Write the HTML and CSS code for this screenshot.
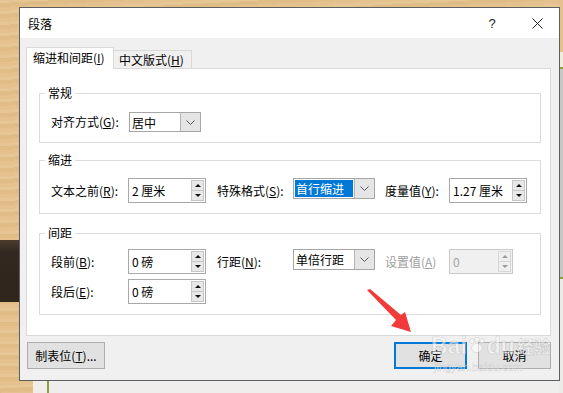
FILE: index.html
```html
<!DOCTYPE html>
<html lang="zh-CN">
<head>
    <meta charset="UTF-8">
    <meta name="viewport" content="width=device-width, initial-scale=1.0">
    <title>段落</title>
    <link rel="stylesheet" href="styles.css">
</head>
<body>
    <div class="screen">
        <div class="dialog">
            <div class="titlebar">
                <span class="title">段落</span>
                <span class="help">?</span>
                <span class="close">
                    <svg width="11" height="11" viewBox="0 0 11 11"><path d="M0.5 0.5 L10.5 10.5 M10.5 0.5 L0.5 10.5" stroke="#222" stroke-width="1" fill="none"/></svg>
                </span>
            </div>

            <div class="tabs">
                <div class="tab active">缩进和间距(<u>I</u>)</div>
                <div class="tab">中文版式(<u>H</u>)</div>
            </div>

            <div class="panel">
                <fieldset class="group group-general">
                    <legend>常规</legend>
                    <div class="grid">
                        <label>对齐方式(<u>G</u>):</label>
                        <div class="combo combo-short">
                            <div class="val"><span>居中</span></div>
                            <div class="drop"><svg width="9" height="5" viewBox="0 0 9 5"><polyline points="0.5,0.5 4.5,4.5 8.5,0.5" stroke="#555" fill="none"/></svg></div>
                        </div>
                    </div>
                </fieldset>

                <fieldset class="group group-indent">
                    <legend>缩进</legend>
                    <div class="grid">
                        <label>文本之前(<u>R</u>):</label>
                        <div class="spin">
                            <div class="val">2 厘米</div>
                            <div class="spin-btns"><div class="spin-btn"><i class="up"></i></div><div class="spin-btn"><i class="down"></i></div></div>
                        </div>
                        <label>特殊格式(<u>S</u>):</label>
                        <div class="combo">
                            <div class="val sel"><span>首行缩进</span></div>
                            <div class="drop"><svg width="9" height="5" viewBox="0 0 9 5"><polyline points="0.5,0.5 4.5,4.5 8.5,0.5" stroke="#555" fill="none"/></svg></div>
                        </div>
                        <label>度量值(<u>Y</u>):</label>
                        <div class="spin">
                            <div class="val">1.27 厘米</div>
                            <div class="spin-btns"><div class="spin-btn"><i class="up"></i></div><div class="spin-btn"><i class="down"></i></div></div>
                        </div>
                    </div>
                </fieldset>

                <fieldset class="group group-spacing">
                    <legend>间距</legend>
                    <div class="grid">
                        <label>段前(<u>B</u>):</label>
                        <div class="spin">
                            <div class="val">0 磅</div>
                            <div class="spin-btns"><div class="spin-btn"><i class="up"></i></div><div class="spin-btn"><i class="down"></i></div></div>
                        </div>
                        <label>行距(<u>N</u>):</label>
                        <div class="combo">
                            <div class="val"><span>单倍行距</span></div>
                            <div class="drop"><svg width="9" height="5" viewBox="0 0 9 5"><polyline points="0.5,0.5 4.5,4.5 8.5,0.5" stroke="#555" fill="none"/></svg></div>
                        </div>
                        <label class="disabled">设置值(<u>A</u>)</label>
                        <div class="spin spin-narrow disabled">
                            <div class="val">0</div>
                            <div class="spin-btns"><div class="spin-btn"><i class="up"></i></div><div class="spin-btn"><i class="down"></i></div></div>
                        </div>

                        <label>段后(<u>E</u>):</label>
                        <div class="spin">
                            <div class="val">0 磅</div>
                            <div class="spin-btns"><div class="spin-btn"><i class="up"></i></div><div class="spin-btn"><i class="down"></i></div></div>
                        </div>
                    </div>
                </fieldset>
            </div>

            <div class="footer">
                <button class="btn btn-wide">制表位(<u>T</u>)...</button>
                <button class="btn btn-default">确定</button>
                <button class="btn">取消</button>
            </div>
        </div>

        <!-- annotation arrow drawn over the screenshot -->
        <svg class="arrow" width="563" height="393" viewBox="0 0 563 393">
            <polygon points="367,290 370,289 401,315 405,312 411,332 391,326 396,320" fill="#f23a3a"/>
        </svg>

        <div class="watermark">
            <div class="wm-logo">Bai<svg width="18" height="16" viewBox="0 0 18 16"><circle cx="4" cy="4" r="2.3"/><circle cx="9" cy="2.6" r="2.3"/><circle cx="14" cy="4" r="2.3"/><ellipse cx="9" cy="11" rx="5.5" ry="4.5"/></svg>du <span>经验</span></div>
            <div class="wm-url">jingyan.baidu.com</div>
        </div>
    </div>
</body>
</html>
```

FILE: styles.css
```css
body {
    margin: 0;
    font-family: "Noto Sans CJK SC", "Microsoft YaHei", sans-serif;
    font-size: 12px;
    color: #000;
}

.screen {
    position: relative;
    width: 563px;
    height: 393px;
    overflow: hidden;
    box-sizing: border-box;
    padding: 7px 0 0 19px;
    background:
        linear-gradient(#e4c18d 0 52px, #f1ebdd 52px 67px, #8f9d3c 67px 69px, #c7c7c5 69px 277px, #8f9d3c 277px 279px, #ecebe8 279px) right top / 4px 100% no-repeat,
        linear-gradient(90deg, transparent 0 33px, #efeeec 33px 47px, #8f9d3c 47px 49px, #efeeec 49px) left bottom / 100% 12px no-repeat,
        linear-gradient(#4b3b2d, #33281f 20%, #2f251d) 0 240px / 19px 62px no-repeat,
        repeating-linear-gradient(177deg, rgba(255, 255, 255, 0.07) 0 3px, rgba(140, 90, 30, 0.06) 3px 7px, rgba(255, 255, 255, 0) 7px 11px),
        #e5c28d;
}

.dialog {
    box-sizing: border-box;
    width: 541px;
    height: 374px;
    border: 1px solid #5e5e5e;
    background: #f0f0f0;
    display: flex;
    flex-direction: column;
}

/* title bar */
.titlebar {
    height: 30px;
    background: #fff;
    display: flex;
    align-items: center;
    padding-left: 8px;
}

.title {
    flex: 1;
}

.help {
    width: 46px;
    text-align: center;
    font-family: "Liberation Sans", sans-serif;
    font-size: 13px;
    color: #222;
}

.close {
    width: 44px;
    height: 30px;
    display: flex;
    align-items: center;
    justify-content: center;
}

/* tabs */
.tabs {
    display: flex;
    align-items: flex-end;
    height: 21px;
    margin: 9px 0 0 6px;
}

.tab {
    box-sizing: border-box;
    width: 78px;
    height: 18px;
    padding-left: 5px;
    border: 1px solid #d9d9d9;
    border-bottom: none;
    border-left: none;
    background: #f0f0f0;
    line-height: 18px;
}

.tab.active {
    width: 88px;
    height: 22px;
    margin-bottom: -1px;
    padding-left: 6px;
    border-left: 1px solid #d9d9d9;
    background: #fff;
    line-height: 20px;
    position: relative;
    z-index: 1;
}

/* tab page */
.panel {
    box-sizing: border-box;
    height: 268px;
    margin: 0 8px 0 6px;
    padding: 0 9px 0 12px;
    border: 1px solid #d9d9d9;
    background: #fff;
}

.group {
    margin: 0;
    min-width: 0;
    padding: 0 0 10px 5px;
    border: 1px solid #dcdcdc;
}

.group legend {
    padding: 0 3px;
    line-height: 16px;
}

.group-general {
    margin-top: 16px;
    padding-top: 11px;
}

.group-indent {
    margin-top: 9px;
    padding-top: 10px;
}

.group-spacing {
    margin-top: 11px;
    padding-top: 8px;
}

.grid {
    display: grid;
    grid-template-columns: 77px 89px 76px 92px 64px 1fr;
    row-gap: 5px;
    align-items: center;
    margin-left: 6px;
}

label {
    line-height: 16px;
    white-space: nowrap;
}

label.disabled {
    color: #9d9d9d;
}

/* combo box */
.combo {
    box-sizing: border-box;
    display: flex;
    width: 82px;
    height: 21px;
    border: 1px solid #a6a6a6;
    background: #fff;
    align-self: start;
}

.combo-short {
    width: 72px;
    height: 20px;
    margin-left: 1px;
}

.combo .val {
    flex: 1;
    padding: 1px;
    display: flex;
}

.combo .val span {
    flex: 1;
    display: flex;
    align-items: center;
    padding-left: 1px;
}

.combo .val.sel span {
    background: #0078d7;
    color: #fff;
}

.combo .drop {
    width: 19px;
    background: #e5e5e5;
    border-left: 1px solid #b4b4b4;
    display: flex;
    align-items: center;
    justify-content: center;
}

/* spin box */
.spin {
    box-sizing: border-box;
    display: flex;
    width: 78px;
    height: 25px;
    border: 1px solid #a9a9a9;
    background: #fff;
}

.spin .val {
    flex: 1;
    padding-left: 3px;
    display: flex;
    align-items: center;
}

.spin-btns {
    width: 13px;
    margin: 1px 1px 1px 0;
    display: flex;
    flex-direction: column;
}

.spin-btn {
    flex: 1;
    box-sizing: border-box;
    border: 1px solid #c6c6c6;
    background: #e8e8e8;
    display: flex;
    align-items: center;
    justify-content: center;
}

.spin-btn + .spin-btn {
    border-top: none;
}

.spin-btn i {
    width: 0;
    height: 0;
    border-left: 3px solid transparent;
    border-right: 3px solid transparent;
}

.spin-btn i.up {
    border-bottom: 3px solid #111;
}

.spin-btn i.down {
    border-top: 3px solid #111;
}

.spin.spin-narrow {
    width: 64px;
}

.spin.disabled {
    background: #f0f0f0;
    border-color: #c9c9c9;
    color: #a3a3a3;
}

.spin.disabled .spin-btn {
    background: #efefef;
    border-color: #d6d6d6;
}

.spin.disabled .spin-btn i.up {
    border-bottom-color: #9a9a9a;
}

.spin.disabled .spin-btn i.down {
    border-top-color: #9a9a9a;
}

/* buttons */
.footer {
    display: flex;
    padding: 6px 8px 0 7px;
}

.btn {
    box-sizing: border-box;
    width: 73px;
    height: 27px;
    padding: 0;
    border: 1px solid #adadad;
    background: #e1e1e1;
    font-family: inherit;
    font-size: 12px;
    color: #000;
}

.btn + .btn {
    margin-left: 11px;
}

.btn-wide {
    width: 78px;
}

.btn-default {
    margin-left: auto !important;
    border: 2px solid #0078d7;
}

/* overlays on the screenshot */
.arrow {
    position: absolute;
    left: 0;
    top: 0;
    pointer-events: none;
}

.watermark {
    position: absolute;
    left: 431px;
    top: 333px;
    color: rgba(255, 255, 255, 0.55);
    pointer-events: none;
}

.wm-logo {
    display: flex;
    align-items: flex-end;
    font-family: "Liberation Sans", sans-serif;
    font-weight: bold;
    font-size: 23px;
    line-height: 26px;
    -webkit-text-stroke: 0.6px rgba(160, 160, 160, 0.45);
}

.wm-logo svg {
    fill: rgba(255, 255, 255, 0.55);
    stroke: rgba(160, 160, 160, 0.45);
    stroke-width: 0.6;
    margin: 0 1px 6px 1px;
}

.wm-logo span {
    font-family: "Noto Sans CJK SC", sans-serif;
    font-size: 17px;
    margin-left: 2px;
}

.wm-url {
    font-family: "Liberation Sans", sans-serif;
    font-size: 11px;
    line-height: 12px;
    margin: 2px 0 0 3px;
    -webkit-text-stroke: 0.4px rgba(160, 160, 160, 0.45);
}
```
